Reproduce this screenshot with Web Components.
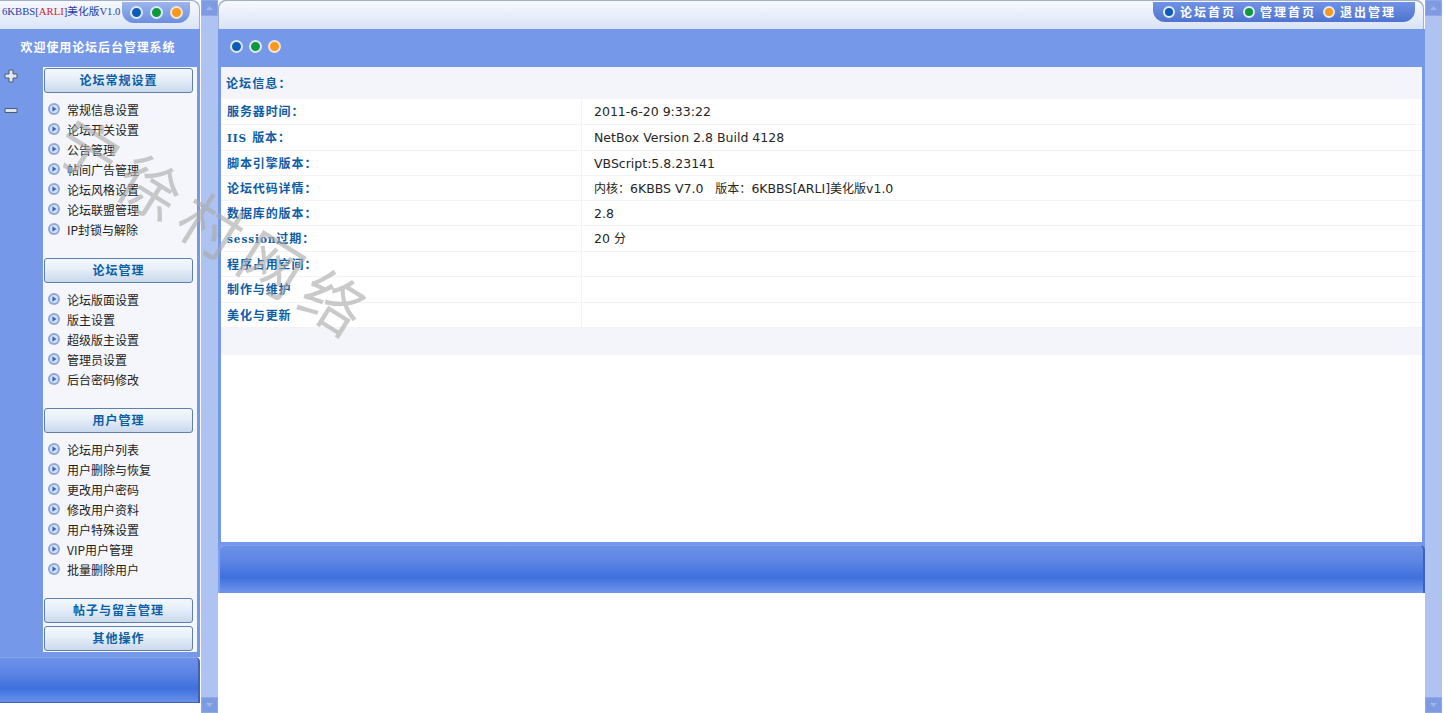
<!DOCTYPE html>
<html lang="zh">
<head>
<meta charset="utf-8">
<title>6KBBS</title>
<style>
  html, body { margin: 0; height: 100%; background: #fff; overflow: hidden; }
  body { font-family: "Noto Sans CJK SC", sans-serif; font-size: 12px; }
</style>
</head>
<body>
<bbs-app></bbs-app>
<script>
// Three coloured dots used in the sidebar head, the main bar
class DotTrio extends HTMLElement {
  constructor() {
    super();
    const gap = this.getAttribute('gap') || '7';
    this.attachShadow({ mode: 'open' }).innerHTML = `
      <style>
        :host { display: inline-flex; gap: ${gap}px; align-items: center; }
        i { width: 9px; height: 9px; border-radius: 50%; border: 2px solid #dfe8fb; display: block; }
        i:nth-of-type(1) { background: #0b5cb5; }
        i:nth-of-type(2) { background: #0c9a3a; }
        i:nth-of-type(3) { background: #f7981f; border-color: #f6e6d6; }
      </style>
      <i></i><i></i><i></i>`;
  }
}
customElements.define('dot-trio', DotTrio);

// Fake scrollbar strip with the two arrow buttons
class ScrollStrip extends HTMLElement {
  constructor() {
    super();
    this.attachShadow({ mode: 'open' }).innerHTML = `
      <style>
        :host { display: flex; flex-direction: column; justify-content: space-between; background: #aec3f1; height: 713px; box-sizing: border-box; }
        b { display: flex; align-items: center; justify-content: center; height: 16px; background: #7d9be2; border: 1px solid #8ea9e6; box-sizing: border-box; }
        svg { display: block; }
      </style>
      <b><svg width="7" height="4"><path d="M0 4 3.5 0 7 4z" fill="#a3b6e6"/></svg></b>
      <b><svg width="7" height="4"><path d="M0 0 3.5 4 7 0z" fill="#a3b6e6"/></svg></b>`;
  }
}
customElements.define('scroll-strip', ScrollStrip);

// Single link in a sidebar group
class MenuItem extends HTMLElement {
  constructor() {
    super();
    this.attachShadow({ mode: 'open' }).innerHTML = `
      <style>
        :host { display: flex; align-items: center; height: 20px; box-sizing: border-box; padding: 0 0 2px 5px; gap: 7px; color: #222; font-size: 12px; white-space: nowrap; }
        svg { flex: none; }
      </style>
      <svg width="12" height="12" viewBox="0 0 12 12">
        <circle cx="6" cy="6" r="6" fill="#8fa8dc"/>
        <circle cx="6" cy="6" r="4" fill="#d5e0f5"/>
        <path d="M4.4 3.2 8.6 6 4.4 8.8z" fill="#3a68bd"/>
      </svg>
      <slot></slot>`;
  }
}
customElements.define('menu-item', MenuItem);

// Sidebar group: a heading button with its links under it
class MenuGroup extends HTMLElement {
  constructor() {
    super();
    this.attachShadow({ mode: 'open' }).innerHTML = `
      <style>
        :host { display: block; }
        .btn {
          width: 149px; height: 25px; margin-left: 1px; box-sizing: border-box; padding-bottom: 2px;
          border: 1px solid #5f80ad; border-radius: 3px;
          background: linear-gradient(#f4f8fd, #e6eef8 45%, #c9d9ec);
          color: #0a5ea8; font-weight: 700; font-size: 12px; letter-spacing: 1px;
          display: flex; align-items: center; justify-content: center;
        }
        .links { padding: 7px 0 18px 0; }
        :host([closed]) .links { display: none; }
        :host([closed]) .btn { margin-bottom: 3px; }
      </style>
      <div class="btn">${this.getAttribute('title')}</div>
      <div class="links"><slot></slot></div>`;
  }
}
customElements.define('menu-group', MenuGroup);

class SideMenu extends HTMLElement {
  constructor() {
    super();
    const groups = [
      ['论坛常规设置', ['常规信息设置', '论坛开关设置', '公告管理', '帖间广告管理', '论坛风格设置', '论坛联盟管理', 'IP封锁与解除']],
      ['论坛管理', ['论坛版面设置', '版主设置', '超级版主设置', '管理员设置', '后台密码修改']],
      ['用户管理', ['论坛用户列表', '用户删除与恢复', '更改用户密码', '修改用户资料', '用户特殊设置', 'VIP用户管理', '批量删除用户']],
      ['帖子与留言管理', null],
      ['其他操作', null]
    ];
    const html = groups.map(([t, items]) => items
      ? `<menu-group title="${t}">${items.map(i => `<menu-item>${i}</menu-item>`).join('')}</menu-group>`
      : `<menu-group title="${t}" closed></menu-group>`).join('');
    this.attachShadow({ mode: 'open' }).innerHTML = `
      <style>
        :host { display: flex; flex-direction: column; width: 200px; height: 713px; }
        .head {
          height: 29px; flex: none; display: flex; justify-content: space-between; align-items: flex-start;
          background: linear-gradient(#f7f9fe, #dbe5f6);
          border-top-right-radius: 8px; box-shadow: inset -1px 1px 0 #9fb0c8;
        }
        .name { font: 10.7px "Liberation Serif", "Noto Sans CJK SC", serif; color: #2a38a8; padding: 3px 0 0 2px; white-space: nowrap; line-height: 16px; }
        .name em { font-style: normal; color: #d8262c; }
        .pill {
          margin: 2px 10px 0 0; width: 68px; height: 21px; display: flex; align-items: center; justify-content: center;
          background: linear-gradient(#9db5ec, #6b8ede); border-radius: 0 0 12px 12px;
        }
        .body { flex: none; height: 628px; background: #7598e8; display: flex; flex-direction: column; }
        .welcome { height: 38px; flex: none; box-sizing: border-box; padding: 9px 4px 0 0; text-align: center; color: #fff; font-weight: 700; font-size: 12px; letter-spacing: .9px; line-height: 18px; }
        .row { display: flex; flex: 1; }
        .tools { width: 43px; flex: none; display: flex; flex-direction: column; align-items: flex-start; gap: 20px; padding: 2px 0 0 4px; box-sizing: border-box; }
        .tools svg { display: block; }
        .panel { width: 154px; height: 585px; flex: none; background: #f4f6fb; padding-top: 1px; box-sizing: border-box; }
        .foot {
          flex: none; height: 46px; border-radius: 0 5px 0 0;
          background: linear-gradient(#6d92e8, #5c84e3 35%, #3f70dd 68%, #6a92e8);
          box-shadow: inset -2px -1px 0 #3d62b8, inset 0 1px 0 #8aa8ee;
        }
      </style>
      <div class="head">
        <div class="name">6KBBS[<em>ARLI</em>]美化版V1.0</div>
        <div class="pill"><dot-trio></dot-trio></div>
      </div>
      <div class="body">
        <div class="welcome">欢迎使用论坛后台管理系统</div>
        <div class="row">
          <div class="tools">
            <svg width="14" height="14" viewBox="0 0 14 14"><path d="M5 1h4v4h4v4H9v4H5V9H1V5h4z" fill="#e3e8ee" stroke="#4c5c70"/></svg>
            <svg width="14" height="14" viewBox="0 0 14 14"><path d="M1 5.5h12v4H1z" fill="#dde3ea" stroke="#4c5c70"/></svg>
          </div>
          <div class="panel">${html}</div>
        </div>
      </div>
      <div class="foot"></div>`;
  }
}
customElements.define('side-menu', SideMenu);

// One row of the information table
class InfoRow extends HTMLElement {
  constructor() {
    super();
    const h = this.getAttribute('h') || '25';
    // latin words in the labels are set a bit smaller than the chinese ones
    const label = this.getAttribute('label').replace(/[A-Za-z]+/, m => `<small>${m}</small>`);
    this.attachShadow({ mode: 'open' }).innerHTML = `
      <style>
        :host { display: grid; grid-template-columns: 361px 1fr; height: ${h}px; box-sizing: border-box; border-bottom: 1px solid #f1f3f9; }
        .k { padding: 0 0 2px 6px; border-right: 1px solid #f1f3f9; display: flex; align-items: center;
             font: 700 12px "DejaVu Serif", "Noto Sans CJK TC", serif; letter-spacing: .9px; color: #0f5ca6; white-space: pre; }
        .k small { font-size: 10.5px; }
        .v { padding: 1px 0 0 12px; display: block;
             font: 12.5px/24px "DejaVu Sans", "Noto Sans CJK TC", sans-serif; color: #262626; white-space: pre; }
      </style>
      <div class="k"><span>${label}</span></div>
      <div class="v"><slot></slot></div>`;
  }
}
customElements.define('info-row', InfoRow);

class MainPane extends HTMLElement {
  constructor() {
    super();
    const rows = [
      ['服务器时间：', '2011-6-20 9:33:22', 26],
      ['IIS 版本：', 'NetBox Version 2.8 Build 4128', 26],
      ['脚本引擎版本：', 'VBScript:5.8.23141', 25],
      ['论坛代码详情：', '<s>内核：</s>6KBBS V7.0   <s>版本：</s>6KBBS[ARLI]<s>美化版</s>v1.0', 25],
      ['数据库的版本：', '2.8', 25],
      ['session过期：', '20 <s>分</s>', 26],
      ['程序占用空间：', '', 25],
      ['制作与维护', '', 26],
      ['美化与更新', '', 25]
    ];
    this.attachShadow({ mode: 'open' }).innerHTML = `
      <style>
        :host { display: flex; flex-direction: column; width: 1207px; height: 713px; background: #fff; }
        .top {
          height: 29px; flex: none; display: flex; justify-content: flex-end; align-items: flex-start;
          background: linear-gradient(#f8fafe, #d9e3f6); border-radius: 8px 8px 0 0; box-shadow: inset 1px 1px 0 #9fb0c8, inset -1px 1px 0 #9fb0c8;
          margin-right: 1px;
        }
        .nav {
          margin: 2px 9px 0 0; width: 262px; height: 20px; box-sizing: border-box; padding: 0 0 1px 10px; display: flex; align-items: center; gap: 5px;
          background: linear-gradient(#6f92e6, #4f74cf); border-radius: 0 0 12px 12px;
          color: #fff; font-weight: 700; font-size: 12px; letter-spacing: 2px; white-space: nowrap;
        }
        .nav i { width: 8px; height: 8px; flex: none; border-radius: 50%; border: 2px solid #e4ecfb; display: block; }
        .nav span { margin-right: 2px; }
        .bar { flex: none; height: 38px; box-sizing: border-box; background: #7598e8; display: flex; align-items: center; padding: 0 0 4px 12px; }
        .frame { flex: none; height: 475px; box-sizing: border-box; border: solid #7598e8; border-width: 0 3px; background: #fff; }
        .title { height: 32px; box-sizing: border-box; padding: 0 0 2px 5px; background: #f3f5fa; display: flex; align-items: center; font: 700 12px "Noto Sans CJK TC", sans-serif; letter-spacing: 1.1px; color: #0f5ca6; }
        .end { height: 27px; background: #f3f5fa; }
        s { text-decoration: none; font-size: 12px; }
        .edge { flex: none; height: 3px; background: #7598e8; }
        .foot {
          flex: none; height: 48px; border-radius: 5px 5px 0 0;
          background: linear-gradient(#6d92e8, #5c84e3 35%, #3f70dd 68%, #7097ea);
          box-shadow: inset 2px 1px 0 #7f9fec, inset -2px 0 0 #3d62b8;
        }
        .foot-wrap { flex: none; background: #7598e8; }
      </style>
      <div class="top">
        <div class="nav">
          <i style="background:#0b5cb5"></i><span>论坛首页</span>
          <i style="background:#0c9a3a"></i><span>管理首页</span>
          <i style="background:#f7981f"></i><span>退出管理</span>
        </div>
      </div>
      <div class="bar"><dot-trio gap="6"></dot-trio></div>
      <div class="frame">
        <div class="title">论坛信息：</div>
        ${rows.map(r => `<info-row label="${r[0]}" h="${r[2]}">${r[1]}</info-row>`).join('')}
        <div class="end"></div>
      </div>
      <div class="edge"></div>
      <div class="foot-wrap"><div class="foot"></div></div>`;
  }
}
customElements.define('main-pane', MainPane);

// Faint site watermark lying over the page
class WaterMark extends HTMLElement {
  constructor() {
    super();
    this.attachShadow({ mode: 'open' }).innerHTML = `
      <style>
        :host { position: absolute; left: 58px; top: 109px; pointer-events: none; transform: rotate(32deg); transform-origin: 30px 40px;
                font: 400 62px "Noto Sans CJK SC", sans-serif; color: rgba(170,170,170,.62); letter-spacing: 10px; white-space: nowrap; line-height: 74px; }
      </style>
      宁徐村网络`;
  }
}
customElements.define('water-mark', WaterMark);

class BbsApp extends HTMLElement {
  constructor() {
    super();
    this.attachShadow({ mode: 'open' }).innerHTML = `
      <style>
        :host { display: flex; position: relative; width: 1444px; height: 713px; overflow: hidden; background: #fff; }
        scroll-strip { width: 17px; flex: none; }
        .gap { width: 1px; flex: none; }
      </style>
      <side-menu></side-menu>
      <div class="gap"></div>
      <scroll-strip></scroll-strip>
      <main-pane></main-pane>
      <scroll-strip></scroll-strip>
      <water-mark></water-mark>`;
  }
}
customElements.define('bbs-app', BbsApp);
</script>
</body>
</html>
